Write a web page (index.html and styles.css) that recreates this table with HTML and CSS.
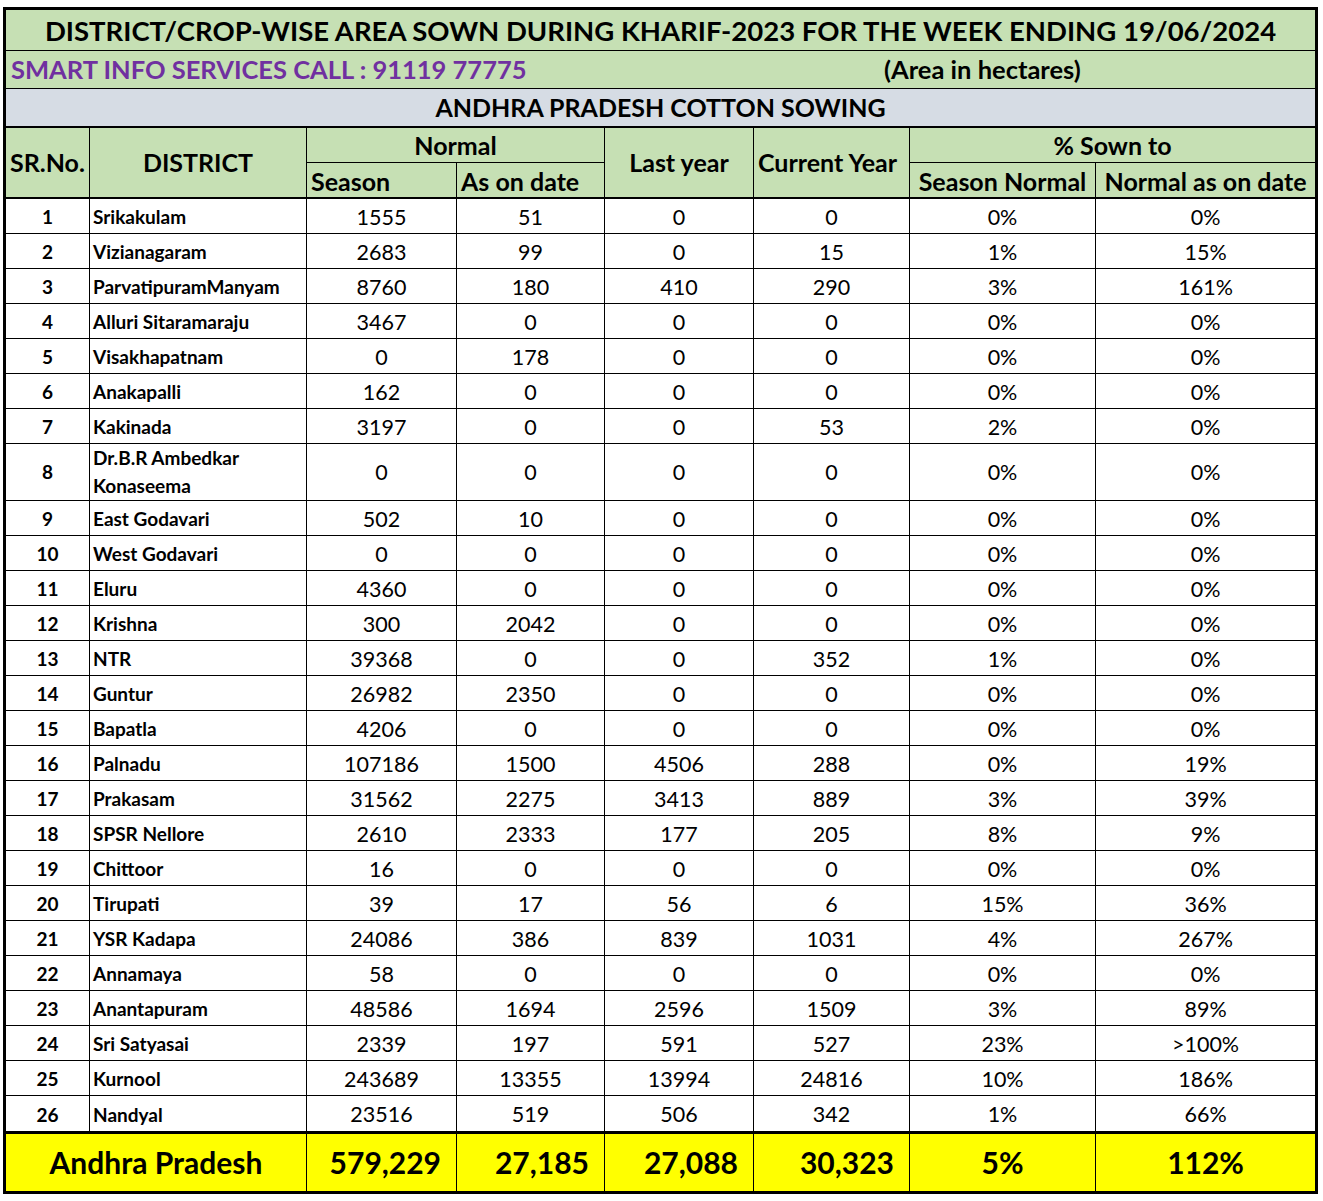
FILE: index.html
```html
<!DOCTYPE html>
<html>
<head>
<meta charset="utf-8">
<link rel="stylesheet" href="styles.css">
</head>
<body>
<div class="sheet">
<table class="grid">
  <colgroup>
    <col class="c1"><col class="c2"><col class="c3"><col class="c4"><col class="c5"><col class="c6"><col class="c7"><col class="c8">
  </colgroup>
  <tbody>
    <tr class="r-title"><td colspan="8" class="title">DISTRICT/CROP-WISE AREA SOWN DURING KHARIF-2023 FOR THE WEEK ENDING 19/06/2024</td></tr>
    <tr class="r-sub"><td colspan="8" class="sub"><span class="smart">SMART INFO SERVICES CALL : 91119 77775</span><span class="unit">(Area in hectares)</span></td></tr>
    <tr class="r-sec"><td colspan="8" class="sec">ANDHRA PRADESH COTTON SOWING</td></tr>
    <tr class="r-h1">
      <td rowspan="2" class="hd hd-sr">SR.No.</td>
      <td rowspan="2" class="hd hd-span">DISTRICT</td>
      <td colspan="2" class="hd hd-top">Normal</td>
      <td rowspan="2" class="hd hd-span">Last year</td>
      <td rowspan="2" class="hd hd-span hd-cy">Current Year</td>
      <td colspan="2" class="hd hd-top">% Sown to</td>
    </tr>
    <tr class="r-h2">
      <td class="hd hd-left">Season</td>
      <td class="hd hd-left">As on date</td>
      <td class="hd hd-sub">Season Normal</td>
      <td class="hd hd-sub">Normal as on date</td>
    </tr>
    <tr class="row"><td class="sr">1</td><td class="dist">Srikakulam</td><td>1555</td><td>51</td><td>0</td><td>0</td><td>0%</td><td>0%</td></tr>
    <tr class="row"><td class="sr">2</td><td class="dist">Vizianagaram</td><td>2683</td><td>99</td><td>0</td><td>15</td><td>1%</td><td>15%</td></tr>
    <tr class="row"><td class="sr">3</td><td class="dist">ParvatipuramManyam</td><td>8760</td><td>180</td><td>410</td><td>290</td><td>3%</td><td>161%</td></tr>
    <tr class="row"><td class="sr">4</td><td class="dist">Alluri Sitaramaraju</td><td>3467</td><td>0</td><td>0</td><td>0</td><td>0%</td><td>0%</td></tr>
    <tr class="row"><td class="sr">5</td><td class="dist">Visakhapatnam</td><td>0</td><td>178</td><td>0</td><td>0</td><td>0%</td><td>0%</td></tr>
    <tr class="row"><td class="sr">6</td><td class="dist">Anakapalli</td><td>162</td><td>0</td><td>0</td><td>0</td><td>0%</td><td>0%</td></tr>
    <tr class="row"><td class="sr">7</td><td class="dist">Kakinada</td><td>3197</td><td>0</td><td>0</td><td>53</td><td>2%</td><td>0%</td></tr>
    <tr class="row row-tall"><td class="sr">8</td><td class="dist dist-wrap">Dr.B.R Ambedkar<br>Konaseema</td><td>0</td><td>0</td><td>0</td><td>0</td><td>0%</td><td>0%</td></tr>
    <tr class="row"><td class="sr">9</td><td class="dist">East Godavari</td><td>502</td><td>10</td><td>0</td><td>0</td><td>0%</td><td>0%</td></tr>
    <tr class="row"><td class="sr">10</td><td class="dist">West Godavari</td><td>0</td><td>0</td><td>0</td><td>0</td><td>0%</td><td>0%</td></tr>
    <tr class="row"><td class="sr">11</td><td class="dist">Eluru</td><td>4360</td><td>0</td><td>0</td><td>0</td><td>0%</td><td>0%</td></tr>
    <tr class="row"><td class="sr">12</td><td class="dist">Krishna</td><td>300</td><td>2042</td><td>0</td><td>0</td><td>0%</td><td>0%</td></tr>
    <tr class="row"><td class="sr">13</td><td class="dist">NTR</td><td>39368</td><td>0</td><td>0</td><td>352</td><td>1%</td><td>0%</td></tr>
    <tr class="row"><td class="sr">14</td><td class="dist">Guntur</td><td>26982</td><td>2350</td><td>0</td><td>0</td><td>0%</td><td>0%</td></tr>
    <tr class="row"><td class="sr">15</td><td class="dist">Bapatla</td><td>4206</td><td>0</td><td>0</td><td>0</td><td>0%</td><td>0%</td></tr>
    <tr class="row"><td class="sr">16</td><td class="dist">Palnadu</td><td>107186</td><td>1500</td><td>4506</td><td>288</td><td>0%</td><td>19%</td></tr>
    <tr class="row"><td class="sr">17</td><td class="dist">Prakasam</td><td>31562</td><td>2275</td><td>3413</td><td>889</td><td>3%</td><td>39%</td></tr>
    <tr class="row"><td class="sr">18</td><td class="dist">SPSR Nellore</td><td>2610</td><td>2333</td><td>177</td><td>205</td><td>8%</td><td>9%</td></tr>
    <tr class="row"><td class="sr">19</td><td class="dist">Chittoor</td><td>16</td><td>0</td><td>0</td><td>0</td><td>0%</td><td>0%</td></tr>
    <tr class="row"><td class="sr">20</td><td class="dist">Tirupati</td><td>39</td><td>17</td><td>56</td><td>6</td><td>15%</td><td>36%</td></tr>
    <tr class="row"><td class="sr">21</td><td class="dist">YSR Kadapa</td><td>24086</td><td>386</td><td>839</td><td>1031</td><td>4%</td><td>267%</td></tr>
    <tr class="row"><td class="sr">22</td><td class="dist">Annamaya</td><td>58</td><td>0</td><td>0</td><td>0</td><td>0%</td><td>0%</td></tr>
    <tr class="row"><td class="sr">23</td><td class="dist">Anantapuram</td><td>48586</td><td>1694</td><td>2596</td><td>1509</td><td>3%</td><td>89%</td></tr>
    <tr class="row"><td class="sr">24</td><td class="dist">Sri Satyasai</td><td>2339</td><td>197</td><td>591</td><td>527</td><td>23%</td><td>&gt;100%</td></tr>
    <tr class="row"><td class="sr">25</td><td class="dist">Kurnool</td><td>243689</td><td>13355</td><td>13994</td><td>24816</td><td>10%</td><td>186%</td></tr>
    <tr class="row row-last"><td class="sr">26</td><td class="dist">Nandyal</td><td>23516</td><td>519</td><td>506</td><td>342</td><td>1%</td><td>66%</td></tr>
    <tr class="total">
      <td colspan="2" class="tot-name">Andhra Pradesh</td>
      <td class="tot-num">579,229</td>
      <td class="tot-num">27,185</td>
      <td class="tot-num">27,088</td>
      <td class="tot-num">30,323</td>
      <td class="tot-pct">5%</td>
      <td class="tot-pct">112%</td>
    </tr>
  </tbody>
</table>
</div>
</body>
</html>
```

FILE: styles.css
```css
html, body {
  margin: 0;
  padding: 0;
  background: #ffffff;
}

body {
  font-family: "Lato", "Noto Sans", sans-serif;
  color: #000;
}

.sheet {
  padding: 7px 0 0 3px;
}

.grid {
  border-collapse: collapse;
  table-layout: fixed;
  width: 1315px;
  border: 3px solid #000;
}

.c1 { width: 85px; }
.c2 { width: 217px; }
.c3 { width: 150px; }
.c4 { width: 148px; }
.c5 { width: 149px; }
.c6 { width: 156px; }
.c7 { width: 186px; }
.c8 { width: 221px; }

.grid td {
  border: 1px solid #000;
  padding: 0;
  text-align: center;
  vertical-align: middle;
  white-space: nowrap;
  overflow: visible;
  line-height: 1.15;
}

/* title block */
.grid .title {
  height: 39px;
  background: #c6e0b4;
  font-weight: 700;
  font-size: 27.5px;
  padding-top: 1px;
}

.grid .sub {
  height: 36px;
  background: #c6e0b4;
  text-align: left;
  font-weight: 700;
  font-size: 25.5px;
  padding-top: 1px;
}

.smart {
  color: #7030a0;
  padding-left: 5px;
  display: inline-block;
  width: 873px;
}

.unit {
  color: #000;
}

.grid .sec {
  height: 37px;
  background: #d6dce4;
  font-weight: 700;
  font-size: 25px;
  border-bottom: 2px solid #000;
  padding-top: 0;
}

/* header */
.grid .hd {
  background: #c6e0b4;
  font-weight: 700;
  font-size: 25px;
}

.grid .hd-top { height: 33px; padding-top: 1px; }
.grid .hd-left,
.grid .hd-sub { height: 32px; padding-top: 2px; border-bottom: 2px solid #000; }
.grid .hd-left { text-align: left; padding-left: 4px; }
.grid .hd-span { border-bottom: 2px solid #000; padding-top: 0; }
.grid .hd-sr { border-bottom: 2px solid #000; text-align: left; padding-left: 4px; padding-top: 0; }
.grid .hd-cy { text-align: left; padding-left: 4px; }

/* data */
.grid .row td {
  height: 32px;
  font-size: 21.5px;
  padding-top: 2px;
}

.grid .row-tall td { height: 56px; padding-top: 0; }
.grid .row-last td { height: 33px; }

.grid .row .sr {
  font-weight: 700;
  font-size: 19px;
}

.grid .row .dist {
  font-weight: 700;
  font-size: 19px;
  text-align: left;
  padding-left: 3px;
}

.grid .row .dist-wrap {
  line-height: 28px;
}

/* total */
.grid .total td {
  background: #ffff00;
  height: 57px;
  font-weight: 700;
  font-size: 30px;
  border-top: 3px solid #000;
  padding-top: 0;
}

.grid .total .tot-num {
  text-align: right;
  padding-right: 15px;
}
```
